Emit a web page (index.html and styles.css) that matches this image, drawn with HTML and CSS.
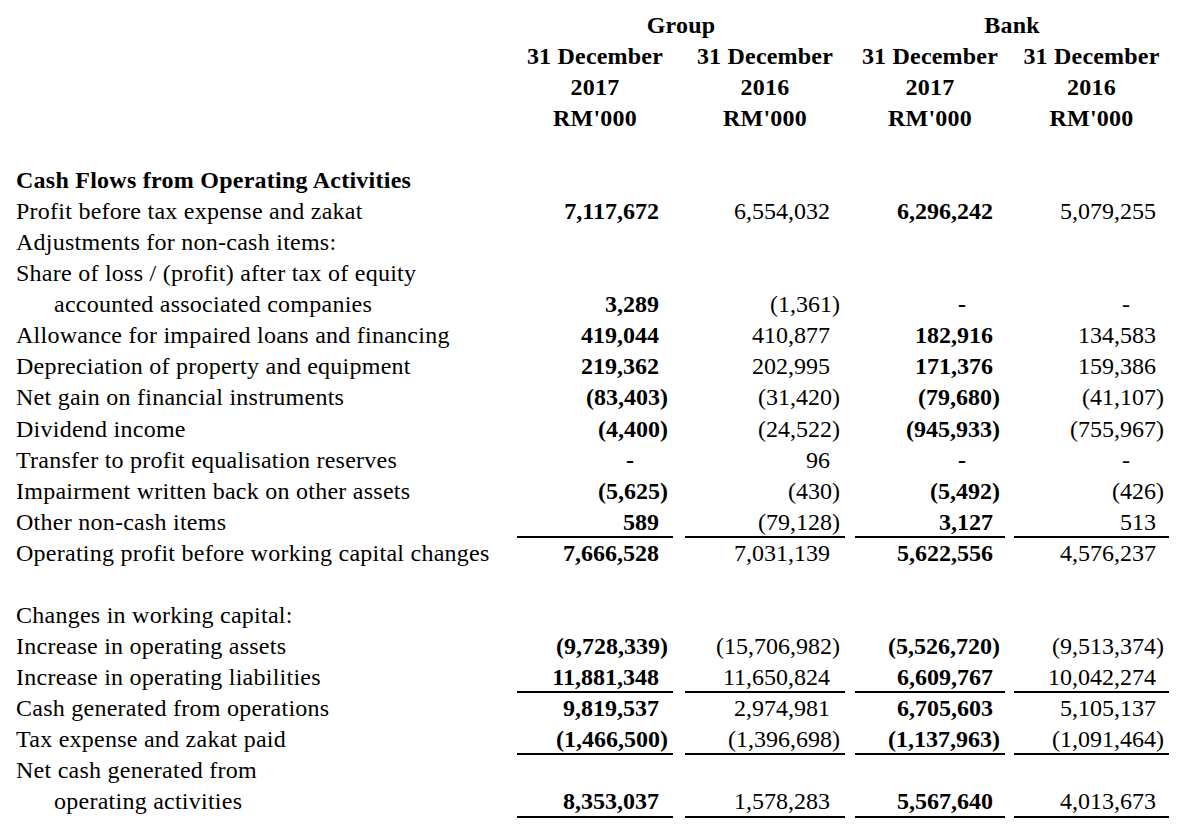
FILE: index.html
```html
<!DOCTYPE html>
<html>
<head>
<meta charset="utf-8">
<link rel="stylesheet" href="styles.css">
</head>
<body>
<div class="sheet">
  <div class="row head"><div class="lab"></div><div class="span grp">Group</div><div class="span bank">Bank</div></div>
  <div class="row head"><div class="lab"></div><div class="h c1">31 December</div><div class="h c2">31 December</div><div class="h c3">31 December</div><div class="h c4">31 December</div></div>
  <div class="row head"><div class="lab"></div><div class="h c1">2017</div><div class="h c2">2016</div><div class="h c3">2017</div><div class="h c4">2016</div></div>
  <div class="row head"><div class="lab"></div><div class="h c1">RM'000</div><div class="h c2">RM'000</div><div class="h c3">RM'000</div><div class="h c4">RM'000</div></div>
  <div class="row"></div>
  <div class="row"><div class="lab b">Cash Flows from Operating Activities</div></div>
  <div class="row"><div class="lab">Profit before tax expense and zakat</div><div class="n c1 b">7,117,672</div><div class="n c2">6,554,032</div><div class="n c3 b">6,296,242</div><div class="n c4">5,079,255</div></div>
  <div class="row"><div class="lab">Adjustments for non-cash items:</div></div>
  <div class="row"><div class="lab">Share of loss / (profit) after tax of equity</div></div>
  <div class="row"><div class="lab ind">accounted associated companies</div><div class="n c1 b">3,289</div><div class="n c2 neg">(1,361)</div><div class="n c3 b dash">-</div><div class="n c4 dash">-</div></div>
  <div class="row"><div class="lab">Allowance for impaired loans and financing</div><div class="n c1 b">419,044</div><div class="n c2">410,877</div><div class="n c3 b">182,916</div><div class="n c4">134,583</div></div>
  <div class="row"><div class="lab">Depreciation of property and equipment</div><div class="n c1 b">219,362</div><div class="n c2">202,995</div><div class="n c3 b">171,376</div><div class="n c4">159,386</div></div>
  <div class="row"><div class="lab">Net gain on financial instruments</div><div class="n c1 b neg">(83,403)</div><div class="n c2 neg">(31,420)</div><div class="n c3 b neg">(79,680)</div><div class="n c4 neg">(41,107)</div></div>
  <div class="row"><div class="lab">Dividend income</div><div class="n c1 b neg">(4,400)</div><div class="n c2 neg">(24,522)</div><div class="n c3 b neg">(945,933)</div><div class="n c4 neg">(755,967)</div></div>
  <div class="row"><div class="lab">Transfer to profit equalisation reserves</div><div class="n c1 b dash">-</div><div class="n c2">96</div><div class="n c3 b dash">-</div><div class="n c4 dash">-</div></div>
  <div class="row"><div class="lab">Impairment written back on other assets</div><div class="n c1 b neg">(5,625)</div><div class="n c2 neg">(430)</div><div class="n c3 b neg">(5,492)</div><div class="n c4 neg">(426)</div></div>
  <div class="row"><div class="lab">Other non-cash items</div><div class="n c1 b u">589</div><div class="n c2 neg u">(79,128)</div><div class="n c3 b u">3,127</div><div class="n c4 u">513</div></div>
  <div class="row"><div class="lab">Operating profit before working capital changes</div><div class="n c1 b">7,666,528</div><div class="n c2">7,031,139</div><div class="n c3 b">5,622,556</div><div class="n c4">4,576,237</div></div>
  <div class="row"></div>
  <div class="row"><div class="lab">Changes in working capital:</div></div>
  <div class="row"><div class="lab">Increase in operating assets</div><div class="n c1 b neg">(9,728,339)</div><div class="n c2 neg">(15,706,982)</div><div class="n c3 b neg">(5,526,720)</div><div class="n c4 neg">(9,513,374)</div></div>
  <div class="row"><div class="lab">Increase in operating liabilities</div><div class="n c1 b u">11,881,348</div><div class="n c2 u">11,650,824</div><div class="n c3 b u">6,609,767</div><div class="n c4 u">10,042,274</div></div>
  <div class="row"><div class="lab">Cash generated from operations</div><div class="n c1 b">9,819,537</div><div class="n c2">2,974,981</div><div class="n c3 b">6,705,603</div><div class="n c4">5,105,137</div></div>
  <div class="row"><div class="lab">Tax expense and zakat paid</div><div class="n c1 b neg u">(1,466,500)</div><div class="n c2 neg u">(1,396,698)</div><div class="n c3 b neg u">(1,137,963)</div><div class="n c4 neg u">(1,091,464)</div></div>
  <div class="row"><div class="lab">Net cash generated from</div></div>
  <div class="row"><div class="lab ind">operating activities</div><div class="n c1 b u">8,353,037</div><div class="n c2 u">1,578,283</div><div class="n c3 b u">5,567,640</div><div class="n c4 u">4,013,673</div></div>
</div>
</body>
</html>
```
FILE: styles.css
```css
html, body {
  margin: 0;
  padding: 0;
  background: #fff;
}
body {
  padding: 9.5px 16px 0 16px;
  font-family: "Liberation Serif", "Times New Roman", serif;
  font-size: 24px;
  color: #000;
}
.sheet {
  display: flex;
  flex-direction: column;
}
.row {
  display: grid;
  grid-template-columns: 501px 156px 172px 160px 164px;
  height: 31.08px;
  line-height: 31.08px;
  white-space: nowrap;
}
.lab {
  grid-column: 1;
  letter-spacing: 0.25px;
}
.ind {
  padding-left: 38px;
}
.b {
  font-weight: bold;
}
.head {
  font-weight: bold;
  letter-spacing: 0.2px;
}
.span.grp {
  grid-column: 2 / 4;
  text-align: center;
}
.span.bank {
  grid-column: 4 / 6;
  margin-left: 10px;
  text-align: center;
}
.h {
  text-align: center;
}
.c1 { grid-column: 2; }
.c2 { grid-column: 3; margin-left: 12px; }
.c3 { grid-column: 4; margin-left: 10px; }
.c4 { grid-column: 5; margin-left: 9px; }
.n {
  text-align: right;
}
.n.c1 { padding-right: 14px; }
.n.c2 { padding-right: 15px; }
.n.c3 { padding-right: 12px; }
.n.c4 { padding-right: 13px; }
.n.neg { padding-right: 5px; }
.n.dash { padding-right: 39px; }
.u {
  background: linear-gradient(#000, #000) bottom / 100% 2px no-repeat;
}
```
